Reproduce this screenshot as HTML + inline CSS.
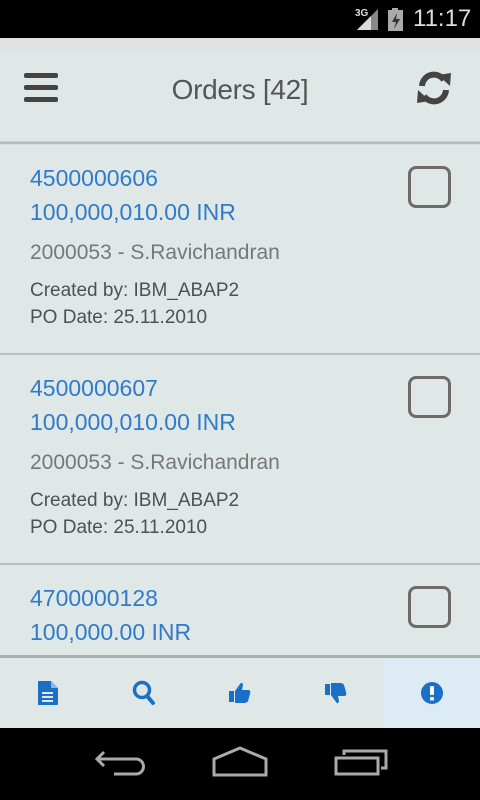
<!DOCTYPE html>
<html><head><meta charset="utf-8"><style>
*{margin:0;padding:0;box-sizing:border-box}
body{width:480px;height:800px;overflow:hidden;background:#e0e8e7;font-family:"Liberation Sans",sans-serif;position:relative}
.sb{position:absolute;top:0;left:0;width:480px;height:38px;background:#000;color:#ddd}
.hd{position:absolute;top:38px;left:0;width:480px;height:104px;background:#e0e8e7;border-top:12px solid #e1e3e3}
.hl{position:absolute;top:141px;left:0;width:480px;height:4px;background:#b5bdbc;border-top:1px solid #c9d0cf;border-bottom:1px solid #d8dfde}
.title{position:absolute;top:74px;left:0;width:480px;text-align:center;font-size:28px;color:#555;font-weight:300;letter-spacing:-0.3px}
.item{position:absolute;left:0;width:480px;height:210px;border-bottom:2px solid #b9bfbe}
.num{position:absolute;left:30px;top:16px;font-size:23px;color:#2f7bc9;line-height:34px}
.name{position:absolute;left:30px;top:96px;font-size:21px;color:#777}
.cr{position:absolute;left:30px;top:132px;font-size:19px;color:#505050;line-height:27px}
.cb{position:absolute;left:408px;top:21px;width:43px;height:42px;border:3px solid #6e6a6a;border-radius:8px}
.bb{position:absolute;top:655px;left:0;width:480px;height:73px;background:#e0e8e7;border-top:3px solid #a8b1b0}
.bb div{position:absolute;top:0;height:70px;width:96px;display:flex;align-items:center;justify-content:center}
.nb{position:absolute;top:728px;left:0;width:480px;height:72px;background:#000}
</style></head><body>
<div class="sb">
<svg style="position:absolute;left:355px;top:6px" width="24" height="24"><text x="0" y="10" font-size="10" fill="#ddd" font-family="Liberation Sans" font-weight="bold">3G</text><polygon points="2,24 23,3 23,24" fill="#888"/><polygon points="2,24 16,10 16,24" fill="#ddd"/></svg>
<svg style="position:absolute;left:388px;top:8px" width="16" height="24"><rect x="4" y="0" width="6" height="3" fill="#aaa"/><rect x="0" y="2" width="15" height="21" fill="#aaa"/><polygon points="9,5 4,14 8,14 6,21 12,11 8,11" fill="#333"/></svg>
<div style="position:absolute;left:413px;top:5px;font-size:24px;color:#ddd">11:17</div>
</div>
<div class="hd"></div>
<svg style="position:absolute;left:24px;top:73px" width="34" height="29"><rect x="0" y="0" width="34" height="5" rx="2" fill="#444"/><rect x="0" y="12" width="34" height="5" rx="2" fill="#444"/><rect x="0" y="24" width="34" height="5" rx="2" fill="#444"/></svg>
<div class="title">Orders [42]</div>
<svg style="position:absolute;left:416px;top:71px" width="36" height="34" viewBox="0 0 36 34"><path d="M6 15 A12 12 0 0 1 28 9" stroke="#444" stroke-width="6" fill="none"/><polygon points="22,4 35,2 34,15" fill="#444"/><path d="M30 19 A12 12 0 0 1 8 25" stroke="#444" stroke-width="6" fill="none"/><polygon points="14,30 1,32 2,19" fill="#444"/></svg>
<div class="hl"></div>
<div class="item" style="top:145px"><div class="num">4500000606<br>100,000,010.00 INR</div><div class="name">2000053 - S.Ravichandran</div><div class="cr">Created by: IBM_ABAP2<br>PO Date: 25.11.2010</div><div class="cb"></div></div>
<div class="item" style="top:355px"><div class="num">4500000607<br>100,000,010.00 INR</div><div class="name">2000053 - S.Ravichandran</div><div class="cr">Created by: IBM_ABAP2<br>PO Date: 25.11.2010</div><div class="cb"></div></div>
<div class="item" style="top:565px"><div class="num">4700000128<br>100,000.00 INR</div><div class="cb"></div></div>
<div class="bb">
<div style="left:0"><svg width="22" height="26"><path d="M1 1h13l7 7v16a1 1 0 0 1-1 1H1z" fill="#1a6fc6"/><path d="M14 1v7h7" fill="#8cb6e3"/><rect x="5" y="12" width="11" height="2" fill="#e0e8e7"/><rect x="5" y="16" width="11" height="2" fill="#e0e8e7"/><rect x="5" y="20" width="11" height="2" fill="#e0e8e7"/></svg></div>
<div style="left:96px"><svg width="24" height="26"><circle cx="10" cy="10" r="7.5" stroke="#1a6fc6" stroke-width="3.5" fill="none"/><line x1="15" y1="16" x2="21" y2="23" stroke="#1a6fc6" stroke-width="4" stroke-linecap="round"/></svg></div>
<div style="left:192px"><svg width="24" height="24"><rect x="1" y="10" width="5" height="11" fill="#1a6fc6"/><path d="M7 10 L12 3 Q14 0 15 4 L14 9 H21 Q23 10 22 13 L20 20 Q19 22 16 22 H7z" fill="#1a6fc6"/></svg></div>
<div style="left:288px"><svg width="24" height="24" style="transform:scaleY(-1)"><rect x="1" y="10" width="5" height="11" fill="#1a6fc6"/><path d="M7 10 L12 3 Q14 0 15 4 L14 9 H21 Q23 10 22 13 L20 20 Q19 22 16 22 H7z" fill="#1a6fc6"/></svg></div>
<div style="left:384px;background:#dcebf4"><svg width="24" height="24"><circle cx="12" cy="12" r="11" fill="#1a6fc6"/><rect x="10" y="5" width="4" height="9" rx="1" fill="#fff"/><rect x="10" y="16" width="4" height="3.5" rx="1" fill="#fff"/></svg></div>
</div>
<div class="nb">
<svg style="position:absolute;left:94px;top:20px" width="52" height="32"><path d="M10 4 L3 11 L10 18 M3 11 H42 A7 7 0 0 1 42 26 H20" stroke="#aaa" stroke-width="3" fill="none"/></svg>
<svg style="position:absolute;left:211px;top:18px" width="58" height="32"><path d="M3 13 L29 2 L55 13 V29 H3z" stroke="#aaa" stroke-width="3" fill="none"/></svg>
<svg style="position:absolute;left:334px;top:20px" width="56" height="30"><rect x="2" y="10" width="42" height="16" stroke="#aaa" stroke-width="3" fill="none"/><path d="M10 7 V3 H52 V20 H47" stroke="#aaa" stroke-width="3" fill="none"/></svg>
</div>
</body></html>
